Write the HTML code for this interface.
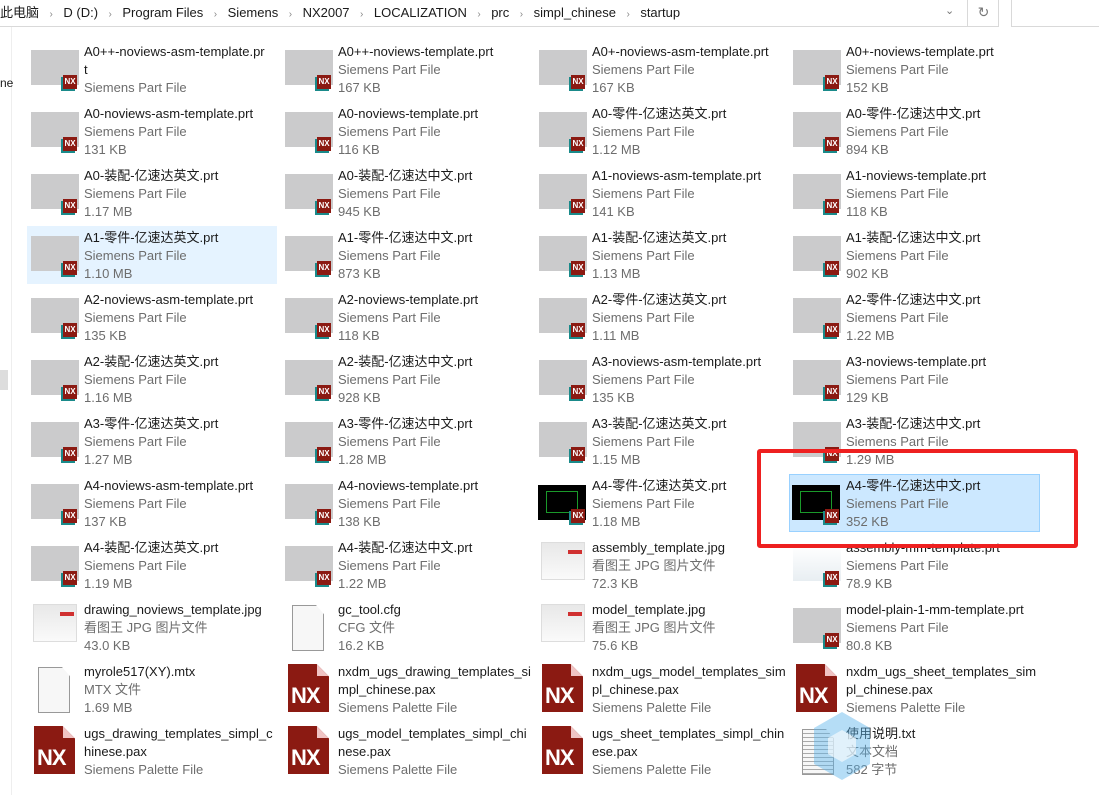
<!DOCTYPE html>
<html><head><meta charset="utf-8"><style>
body{margin:0;width:1099px;height:795px;background:#fff;overflow:hidden;position:relative;font-family:"Liberation Sans","Noto Sans CJK SC",sans-serif;font-size:13px}
.top{position:absolute;left:0;top:0;width:998px;height:26px;border-bottom:1px solid #d9d9d9;border-right:1px solid #d9d9d9}
.bc{position:absolute;top:2px;color:#1a1a1a;font-size:13px;white-space:nowrap}
.bc span{margin-right:10.5px}.bc i{font-style:normal;color:#888;margin-right:10.5px;font-size:10px}
.ref{position:absolute;left:967px;top:0;width:31px;height:26px;border-left:1px solid #d9d9d9;color:#777;text-align:center;line-height:24px;font-size:14px}
.srch{position:absolute;left:1011px;top:0;width:90px;height:26px;border-left:1px solid #d9d9d9;border-bottom:1px solid #d9d9d9}
.nav{position:absolute;left:11px;top:27px;width:1px;height:768px;background:#eee}
.it{position:absolute;width:250px;height:58px}
.g{position:absolute;left:0;top:9px;width:48px;height:35px;background:#cbcbcc}
.bd{position:absolute;left:32px;top:34px;width:14px;height:14px;background:#8b1a12;color:#fff;font:bold 8px/14px "Liberation Sans",sans-serif;text-align:center;box-shadow:-2px 2px 0 #1a8a8a}
.t{position:absolute;left:53px;top:2px;line-height:18px;white-space:nowrap}
.n{color:#1a1a1a}.s{color:#6d6d6d}
.blk{position:absolute;left:0;top:3px;width:48px;height:35px;background:#000}
.blk:after{content:"";position:absolute;left:8px;top:6px;width:30px;height:20px;border:1px solid #1a9a2a}
.nxb{position:absolute;left:3px;top:-5px;width:41px;height:48px;background:#8b1a12;clip-path:polygon(0 0,70% 0,100% 26%,100% 100%,0 100%);color:#fff;font:bold 22px/20px "Liberation Sans",sans-serif}
.nxb b{position:absolute;left:3px;top:22px;letter-spacing:-1px}
.nxb:after{content:"";position:absolute;left:29px;top:0;width:12px;height:12px;background:#f0c4c4;clip-path:polygon(0 0,100% 100%,0 100%)}
.doc{position:absolute;left:7px;top:-3px;width:30px;height:44px;border:1px solid #999;background:#f7f7f7;clip-path:polygon(0 0,75% 0,100% 20%,100% 100%,0 100%)}
.jpg{position:absolute;left:2px;top:5px;width:42px;height:36px;background:linear-gradient(#e8e8e8,#fafafa);border:1px solid #ddd}
.jpg:after{content:"";position:absolute;left:26px;top:7px;width:14px;height:4px;background:#d03030}
</style></head><body>
<div class="top"><div class="bc" style="left:0"><span>此电脑</span><i>›</i><span>D (D:)</span><i>›</i><span>Program Files</span><i>›</i><span>Siemens</span><i>›</i><span>NX2007</span><i>›</i><span>LOCALIZATION</span><i>›</i><span>prc</span><i>›</i><span>simpl_chinese</span><i>›</i><span>startup</span></div><div style="position:absolute;left:945px;top:4px;color:#777;font-size:11px">⌄</div></div>
<div class="ref">↻</div><div class="srch"></div>
<div class="nav"></div>
<div style="position:absolute;left:0;top:76px;color:#1a1a1a;font-size:12px">ne</div>
<div style="position:absolute;left:0;top:370px;width:8px;height:20px;background:#ddd"></div>
<div style="position:absolute;left:27px;top:226px;width:250px;height:58px;background:#e5f3ff"></div>
<div style="position:absolute;left:789px;top:474px;width:249px;height:56px;background:#cce8ff;border:1px solid #99d1ff"></div>

<!-- r0 -->
<div class="it" style="left:31px;top:41px"><div class="g"></div><b class="bd">NX</b><div class="t"><div class="n">A0++-noviews-asm-template.pr<br>t</div><div class="s">Siemens Part File</div></div></div>
<div class="it" style="left:285px;top:41px"><div class="g"></div><b class="bd">NX</b><div class="t"><div class="n">A0++-noviews-template.prt</div><div class="s">Siemens Part File</div><div class="s">167 KB</div></div></div>
<div class="it" style="left:539px;top:41px"><div class="g"></div><b class="bd">NX</b><div class="t"><div class="n">A0+-noviews-asm-template.prt</div><div class="s">Siemens Part File</div><div class="s">167 KB</div></div></div>
<div class="it" style="left:793px;top:41px"><div class="g"></div><b class="bd">NX</b><div class="t"><div class="n">A0+-noviews-template.prt</div><div class="s">Siemens Part File</div><div class="s">152 KB</div></div></div>
<!-- r1 -->
<div class="it" style="left:31px;top:103px"><div class="g"></div><b class="bd">NX</b><div class="t"><div class="n">A0-noviews-asm-template.prt</div><div class="s">Siemens Part File</div><div class="s">131 KB</div></div></div>
<div class="it" style="left:285px;top:103px"><div class="g"></div><b class="bd">NX</b><div class="t"><div class="n">A0-noviews-template.prt</div><div class="s">Siemens Part File</div><div class="s">116 KB</div></div></div>
<div class="it" style="left:539px;top:103px"><div class="g"></div><b class="bd">NX</b><div class="t"><div class="n">A0-零件-亿速达英文.prt</div><div class="s">Siemens Part File</div><div class="s">1.12 MB</div></div></div>
<div class="it" style="left:793px;top:103px"><div class="g"></div><b class="bd">NX</b><div class="t"><div class="n">A0-零件-亿速达中文.prt</div><div class="s">Siemens Part File</div><div class="s">894 KB</div></div></div>
<!-- r2 -->
<div class="it" style="left:31px;top:165px"><div class="g"></div><b class="bd">NX</b><div class="t"><div class="n">A0-装配-亿速达英文.prt</div><div class="s">Siemens Part File</div><div class="s">1.17 MB</div></div></div>
<div class="it" style="left:285px;top:165px"><div class="g"></div><b class="bd">NX</b><div class="t"><div class="n">A0-装配-亿速达中文.prt</div><div class="s">Siemens Part File</div><div class="s">945 KB</div></div></div>
<div class="it" style="left:539px;top:165px"><div class="g"></div><b class="bd">NX</b><div class="t"><div class="n">A1-noviews-asm-template.prt</div><div class="s">Siemens Part File</div><div class="s">141 KB</div></div></div>
<div class="it" style="left:793px;top:165px"><div class="g"></div><b class="bd">NX</b><div class="t"><div class="n">A1-noviews-template.prt</div><div class="s">Siemens Part File</div><div class="s">118 KB</div></div></div>
<!-- r3 -->
<div class="it" style="left:31px;top:227px"><div class="g"></div><b class="bd">NX</b><div class="t"><div class="n">A1-零件-亿速达英文.prt</div><div class="s">Siemens Part File</div><div class="s">1.10 MB</div></div></div>
<div class="it" style="left:285px;top:227px"><div class="g"></div><b class="bd">NX</b><div class="t"><div class="n">A1-零件-亿速达中文.prt</div><div class="s">Siemens Part File</div><div class="s">873 KB</div></div></div>
<div class="it" style="left:539px;top:227px"><div class="g"></div><b class="bd">NX</b><div class="t"><div class="n">A1-装配-亿速达英文.prt</div><div class="s">Siemens Part File</div><div class="s">1.13 MB</div></div></div>
<div class="it" style="left:793px;top:227px"><div class="g"></div><b class="bd">NX</b><div class="t"><div class="n">A1-装配-亿速达中文.prt</div><div class="s">Siemens Part File</div><div class="s">902 KB</div></div></div>
<!-- r4 -->
<div class="it" style="left:31px;top:289px"><div class="g"></div><b class="bd">NX</b><div class="t"><div class="n">A2-noviews-asm-template.prt</div><div class="s">Siemens Part File</div><div class="s">135 KB</div></div></div>
<div class="it" style="left:285px;top:289px"><div class="g"></div><b class="bd">NX</b><div class="t"><div class="n">A2-noviews-template.prt</div><div class="s">Siemens Part File</div><div class="s">118 KB</div></div></div>
<div class="it" style="left:539px;top:289px"><div class="g"></div><b class="bd">NX</b><div class="t"><div class="n">A2-零件-亿速达英文.prt</div><div class="s">Siemens Part File</div><div class="s">1.11 MB</div></div></div>
<div class="it" style="left:793px;top:289px"><div class="g"></div><b class="bd">NX</b><div class="t"><div class="n">A2-零件-亿速达中文.prt</div><div class="s">Siemens Part File</div><div class="s">1.22 MB</div></div></div>
<!-- r5 -->
<div class="it" style="left:31px;top:351px"><div class="g"></div><b class="bd">NX</b><div class="t"><div class="n">A2-装配-亿速达英文.prt</div><div class="s">Siemens Part File</div><div class="s">1.16 MB</div></div></div>
<div class="it" style="left:285px;top:351px"><div class="g"></div><b class="bd">NX</b><div class="t"><div class="n">A2-装配-亿速达中文.prt</div><div class="s">Siemens Part File</div><div class="s">928 KB</div></div></div>
<div class="it" style="left:539px;top:351px"><div class="g"></div><b class="bd">NX</b><div class="t"><div class="n">A3-noviews-asm-template.prt</div><div class="s">Siemens Part File</div><div class="s">135 KB</div></div></div>
<div class="it" style="left:793px;top:351px"><div class="g"></div><b class="bd">NX</b><div class="t"><div class="n">A3-noviews-template.prt</div><div class="s">Siemens Part File</div><div class="s">129 KB</div></div></div>
<!-- r6 -->
<div class="it" style="left:31px;top:413px"><div class="g"></div><b class="bd">NX</b><div class="t"><div class="n">A3-零件-亿速达英文.prt</div><div class="s">Siemens Part File</div><div class="s">1.27 MB</div></div></div>
<div class="it" style="left:285px;top:413px"><div class="g"></div><b class="bd">NX</b><div class="t"><div class="n">A3-零件-亿速达中文.prt</div><div class="s">Siemens Part File</div><div class="s">1.28 MB</div></div></div>
<div class="it" style="left:539px;top:413px"><div class="g"></div><b class="bd">NX</b><div class="t"><div class="n">A3-装配-亿速达英文.prt</div><div class="s">Siemens Part File</div><div class="s">1.15 MB</div></div></div>
<div class="it" style="left:793px;top:413px"><div class="g"></div><b class="bd">NX</b><div class="t"><div class="n">A3-装配-亿速达中文.prt</div><div class="s">Siemens Part File</div><div class="s">1.29 MB</div></div></div>
<!-- r7 -->
<div class="it" style="left:31px;top:475px"><div class="g"></div><b class="bd">NX</b><div class="t"><div class="n">A4-noviews-asm-template.prt</div><div class="s">Siemens Part File</div><div class="s">137 KB</div></div></div>
<div class="it" style="left:285px;top:475px"><div class="g"></div><b class="bd">NX</b><div class="t"><div class="n">A4-noviews-template.prt</div><div class="s">Siemens Part File</div><div class="s">138 KB</div></div></div>
<div class="it" style="left:539px;top:475px"><div class="blk" style="left:-1px;top:10px"></div><b class="bd">NX</b><div class="t"><div class="n">A4-零件-亿速达英文.prt</div><div class="s">Siemens Part File</div><div class="s">1.18 MB</div></div></div>
<div class="it" style="left:793px;top:475px"><div class="blk" style="left:-1px;top:10px"></div><b class="bd">NX</b><div class="t"><div class="n">A4-零件-亿速达中文.prt</div><div class="s">Siemens Part File</div><div class="s">352 KB</div></div></div>
<!-- r8 -->
<div class="it" style="left:31px;top:537px"><div class="g"></div><b class="bd">NX</b><div class="t"><div class="n">A4-装配-亿速达英文.prt</div><div class="s">Siemens Part File</div><div class="s">1.19 MB</div></div></div>
<div class="it" style="left:285px;top:537px"><div class="g"></div><b class="bd">NX</b><div class="t"><div class="n">A4-装配-亿速达中文.prt</div><div class="s">Siemens Part File</div><div class="s">1.22 MB</div></div></div>
<div class="it" style="left:539px;top:537px"><div class="jpg"></div><div class="t"><div class="n">assembly_template.jpg</div><div class="s">看图王 JPG 图片文件</div><div class="s">72.3 KB</div></div></div>
<div class="it" style="left:793px;top:537px"><div class="g" style="background:linear-gradient(#fff,#e8eef2)"></div><b class="bd">NX</b><div class="t"><div class="n">assembly-mm-template.prt</div><div class="s">Siemens Part File</div><div class="s">78.9 KB</div></div></div>
<!-- r9 -->
<div class="it" style="left:31px;top:599px"><div class="jpg"></div><div class="t"><div class="n">drawing_noviews_template.jpg</div><div class="s">看图王 JPG 图片文件</div><div class="s">43.0 KB</div></div></div>
<div class="it" style="left:285px;top:599px"><div class="doc" style="top:6px"></div><div class="t"><div class="n">gc_tool.cfg</div><div class="s">CFG 文件</div><div class="s">16.2 KB</div></div></div>
<div class="it" style="left:539px;top:599px"><div class="jpg"></div><div class="t"><div class="n">model_template.jpg</div><div class="s">看图王 JPG 图片文件</div><div class="s">75.6 KB</div></div></div>
<div class="it" style="left:793px;top:599px"><div class="g"></div><b class="bd">NX</b><div class="t"><div class="n">model-plain-1-mm-template.prt</div><div class="s">Siemens Part File</div><div class="s">80.8 KB</div></div></div>
<!-- r10 -->
<div class="it" style="left:31px;top:661px"><div class="doc" style="top:6px"></div><div class="t"><div class="n">myrole517(XY).mtx</div><div class="s">MTX 文件</div><div class="s">1.69 MB</div></div></div>
<div class="it" style="left:285px;top:661px"><div class="nxb" style="top:3px"><b>NX</b></div><div class="t"><div class="n">nxdm_ugs_drawing_templates_si<br>mpl_chinese.pax</div><div class="s">Siemens Palette File</div></div></div>
<div class="it" style="left:539px;top:661px"><div class="nxb" style="top:3px"><b>NX</b></div><div class="t"><div class="n">nxdm_ugs_model_templates_sim<br>pl_chinese.pax</div><div class="s">Siemens Palette File</div></div></div>
<div class="it" style="left:793px;top:661px"><div class="nxb" style="top:3px"><b>NX</b></div><div class="t"><div class="n">nxdm_ugs_sheet_templates_sim<br>pl_chinese.pax</div><div class="s">Siemens Palette File</div></div></div>
<!-- r11 -->
<div class="it" style="left:31px;top:723px"><div class="nxb" style="top:3px"><b>NX</b></div><div class="t"><div class="n">ugs_drawing_templates_simpl_c<br>hinese.pax</div><div class="s">Siemens Palette File</div></div></div>
<div class="it" style="left:285px;top:723px"><div class="nxb" style="top:3px"><b>NX</b></div><div class="t"><div class="n">ugs_model_templates_simpl_chi<br>nese.pax</div><div class="s">Siemens Palette File</div></div></div>
<div class="it" style="left:539px;top:723px"><div class="nxb" style="top:3px"><b>NX</b></div><div class="t"><div class="n">ugs_sheet_templates_simpl_chin<br>ese.pax</div><div class="s">Siemens Palette File</div></div></div>
<div class="it" style="left:793px;top:723px"><div class="doc" style="left:9px;top:6px;background:repeating-linear-gradient(#f7f7f7 0 3px,#aaa 3px 4px)"></div><div class="t"><div class="n">使用说明.txt</div><div class="s">文本文档</div><div class="s">582 字节</div></div></div>
<svg style="position:absolute;left:812px;top:712px" width="60" height="70" viewBox="0 0 60 70"><polygon points="30,0 58,16 58,52 30,68 2,52 2,16" fill="#5ab4ea" opacity=".45"/><polygon points="30,18 44,26 44,42 30,50 16,42 16,26" fill="#fff" opacity=".6"/></svg>

<div style="position:absolute;left:757px;top:449px;width:313px;height:91px;border:4px solid #ee2020;border-radius:3px"></div>
</body></html>
